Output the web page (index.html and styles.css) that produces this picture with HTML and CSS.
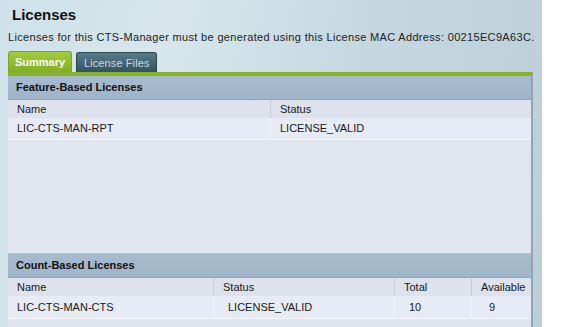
FILE: index.html
```html
<!DOCTYPE html>
<html>
<head>
  <meta charset="UTF-8">
  <title>Licenses</title>
  <link rel="stylesheet" href="styles.css">
</head>
<body>
  <div class="page">
    <h1>Licenses</h1>
    <p class="intro">Licenses for this CTS-Manager must be generated using this License MAC Address: 00215EC9A63C.</p>

    <div class="tabs">
      <div class="tab active">Summary</div>
      <div class="tab">License Files</div>
    </div>

    <div class="panel">
      <div class="section-title">Feature-Based Licenses</div>
      <div class="row head">
        <div class="cell f-name">Name</div>
        <div class="cell f-status">Status</div>
      </div>
      <div class="row data">
        <div class="cell f-name">LIC-CTS-MAN-RPT</div>
        <div class="cell f-status">LICENSE_VALID</div>
      </div>
      <div class="filler"></div>

      <div class="section-title count">Count-Based Licenses</div>
      <div class="row head">
        <div class="cell c-name">Name</div>
        <div class="cell c-status">Status</div>
        <div class="cell c-total">Total</div>
        <div class="cell c-avail">Available</div>
      </div>
      <div class="row data tall">
        <div class="cell c-name">LIC-CTS-MAN-CTS</div>
        <div class="cell c-status value">LICENSE_VALID</div>
        <div class="cell c-total value">10</div>
        <div class="cell c-avail value">9</div>
      </div>
      <div class="rest"></div>
    </div>
  </div>
</body>
</html>
```

FILE: styles.css
```css
body {
  margin: 0;
  background-color: white;
  font-family: "Liberation Sans", Arial, sans-serif;
  font-size: 11px;
  color: #1a1a1a;
}

.page {
  width: 525px;
  height: 327px;
  padding: 0 9px 0 8px;
  overflow: hidden;
  background: linear-gradient(100deg, #cfe1e9 0%, #d6e6ec 30%, #c6d9e2 60%, #bccfd9 100%);
}

h1 {
  margin: 0;
  padding: 6px 0 0 4px;
  height: 18px;
  font-size: 15px;
  line-height: 18px;
  font-weight: bold;
  color: #111;
}

.intro {
  margin: 6px 0 0 0;
  line-height: 14px;
  color: #222;
  white-space: nowrap;
  letter-spacing: 0.33px;
}

.tabs {
  display: flex;
  align-items: flex-end;
  gap: 4px;
  margin-top: 7px;
  height: 21px;
}

.tab {
  height: 20px;
  line-height: 20px;
  padding: 0 0 0 7px;
  border-radius: 3px 3px 0 0;
  background: linear-gradient(#587a8a, #34525f);
  border: 1px solid #2c4652;
  border-bottom: none;
  color: #c9d9e0;
  box-sizing: border-box;
  width: 81px;
  white-space: nowrap;
  letter-spacing: 0.1px;
}

.tab.active {
  height: 21px;
  line-height: 21px;
  width: 64px;
  background: linear-gradient(#a2cc3c, #82b022);
  border-color: #7aa424;
  color: white;
  font-weight: bold;
  padding-left: 6px;
  letter-spacing: 0;
}

.panel {
  border-top: 4px solid #86b22a;
  background-color: #e0e5ef;
  border-right: 2px solid #93a4b4;
  height: 260px;
}

.section-title {
  height: 23px;
  line-height: 23px;
  padding-left: 8px;
  font-weight: bold;
  background: linear-gradient(#a7bbce, #a0b5c9);
  border-bottom: 1px solid #8fa5b9;
  color: #111;
}

.section-title.count {
  border-top: 1px solid #b3c2d2;
}

.row {
  display: flex;
}

.row.head {
  height: 18px;
  line-height: 18px;
  background-color: #dde2ec;
}

.row.data {
  height: 21px;
  line-height: 21px;
  background-color: #e7ebf6;
  border-bottom: 1px solid #f5f7fc;
}

.row.data.tall {
  height: 22px;
  line-height: 22px;
}

.cell {
  padding-left: 9px;
  box-sizing: border-box;
  white-space: nowrap;
}

.head .cell + .cell {
  border-left: 1px solid #c6ccd8;
}

.data .cell + .cell {
  border-left: 1px solid #f1f3f9;
}

.f-name {
  width: 262px;
}

.f-status {
  flex: 1;
}

.c-name {
  width: 205px;
}

.c-status {
  width: 181px;
}

.c-total {
  width: 77px;
}

.c-avail {
  flex: 1;
}

.cell.value {
  padding-left: 14px;
}

.c-avail.value {
  padding-left: 17px;
}

.filler {
  height: 113px;
  background-color: #e0e5ef;
}

.rest {
  height: 10px;
  background-color: #dfe4ee;
}
```
